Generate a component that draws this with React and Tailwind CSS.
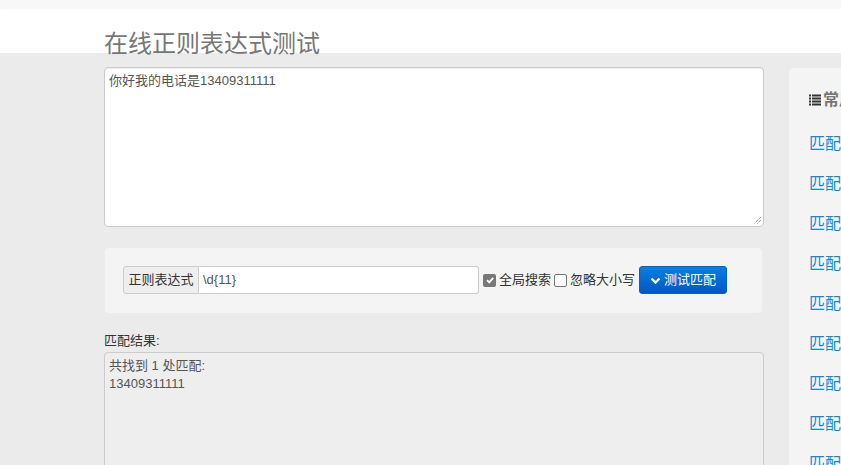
import React from "react";

const font = { fontFamily: '"Liberation Sans", "Noto Sans CJK SC", sans-serif' };

const links = [
  "匹配中文字符的正则表达式",
  "匹配双字节字符(包括汉字在内)",
  "匹配空白行的正则表达式",
  "匹配HTML标记的正则表达式",
  "匹配首尾空白字符的正则表达式",
  "匹配Email地址的正则表达式",
  "匹配网址URL的正则表达式",
  "匹配帐号是否合法",
  "匹配国内电话号码",
];

export default function App() {
  return (
    <div
      className="w-[841px] h-[465px] overflow-hidden bg-[#ebebeb] text-[13px] text-[#333]"
      style={font}
    >
      <div className="h-[53px] bg-white">
        <div className="h-[8px] bg-[#f8f8f8] shadow-[0_1px_2px_rgba(0,0,0,0.04)]" />
      </div>
      <div className="flex pl-[104px] gap-[25px]">
        <div className="w-[660px] shrink-0">
          <h1 className="-mt-[23px] text-[24px] leading-[28px] text-[#777] font-normal">
            在线正则表达式测试
          </h1>
          <div className="mt-[9px] h-[160px] bg-white border border-[#ccc] rounded-[4px] shadow-[inset_0_1px_1px_rgba(0,0,0,0.075)] px-[4px] pt-[5px] text-[#555] leading-[16px] relative">
            你好我的电话是13409311111
            <svg className="absolute right-[1px] bottom-[1px]" width="9" height="9" viewBox="0 0 9 9">
              <path d="M8 1L1 8M8 4L4 8" stroke="#777" strokeWidth="1" strokeDasharray="1 1" />
            </svg>
          </div>
          <div className="mt-[21px] ml-[1px] w-[657px] h-[65px] bg-[#f4f4f4] rounded-[4px] pl-[18px] pt-[18px] flex items-start">
            <div className="flex h-[28px]">
              <div className="w-[76px] bg-[#eee] border border-[#ccc] rounded-l-[3px] flex items-center justify-center text-[#333]">
                正则表达式
              </div>
              <div className="w-[280px] bg-white border border-l-0 border-[#ccc] rounded-r-[3px] flex items-center pl-[4px] text-[#555]">
                \d{"{"}11{"}"}
              </div>
            </div>
            <div className="flex items-center h-[28px] ml-[4px]">
              <div className="w-[13px] h-[13px] rounded-[2px] bg-[#777] flex items-center justify-center">
                <svg width="10" height="10" viewBox="0 0 10 10">
                  <path d="M2 5.2L4.2 7.4L8.2 2.8" stroke="white" strokeWidth="1.8" fill="none" />
                </svg>
              </div>
              <span className="ml-[3px]">全局搜索</span>
              <div className="ml-[3px] w-[13px] h-[13px] rounded-[2px] bg-white border border-[#767676]" />
              <span className="ml-[3px]">忽略大小写</span>
            </div>
            <button className="ml-[4px] w-[88px] h-[28px] rounded-[3px] bg-gradient-to-b from-[#0a80e2] to-[#0056c6] border border-[#0a5fc0] text-white flex items-center justify-center gap-[3px] text-[13px]">
              <svg width="11" height="9" viewBox="0 0 11 9">
                <path d="M1.5 2.5L5.5 6.5L9.5 2.5" stroke="white" strokeWidth="2.4" fill="none" />
              </svg>
              测试匹配
            </button>
          </div>
          <div className="mt-[20px] leading-[16px]">匹配结果:</div>
          <div className="mt-[3px] h-[200px] bg-[#eee] border border-[#ccc] rounded-[4px] px-[4px] pt-[4px] text-[#555] leading-[18px]">
            <div>共找到 1 处匹配:</div>
            <div>13409311111</div>
          </div>
        </div>
        <div className="w-[300px] shrink-0 mt-[15px] h-[500px] bg-[#f4f4f4] rounded-[4px] pl-[20px] pt-[22px]">
          <div className="flex items-center gap-[2px] text-[16px] font-bold text-[#777] leading-[20px]">
            <svg width="12" height="12" viewBox="0 0 12 12" fill="#333">
              <rect x="0" y="0.5" width="2" height="2" />
              <rect x="3" y="0.5" width="9" height="2" />
              <rect x="0" y="3.5" width="2" height="2" />
              <rect x="3" y="3.5" width="9" height="2" />
              <rect x="0" y="6.5" width="2" height="2" />
              <rect x="3" y="6.5" width="9" height="2" />
              <rect x="0" y="9.5" width="2" height="2" />
              <rect x="3" y="9.5" width="9" height="2" />
            </svg>
            <span>常用正则表达式</span>
          </div>
          <div className="mt-[24px] flex flex-col gap-[20px]">
            {links.map((l) => (
              <div key={l} className="text-[16px] leading-[20px] text-[#0a8ed8] whitespace-nowrap">
                {l}
              </div>
            ))}
          </div>
        </div>
      </div>
    </div>
  );
}
